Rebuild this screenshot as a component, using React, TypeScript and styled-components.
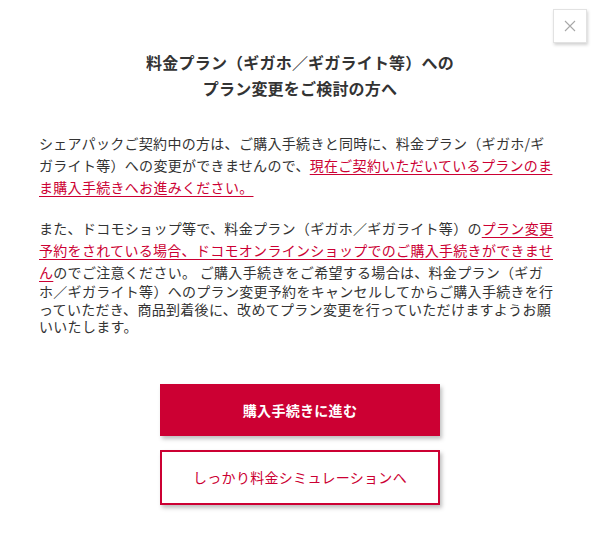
import React from "react";
import styled, { createGlobalStyle } from "styled-components";

const GlobalStyle = createGlobalStyle`
  html, body {
    margin: 0;
    padding: 0;
    background: #ffffff;
  }
  body {
    font-family: "Noto Sans CJK JP", "Noto Sans", sans-serif;
    color: #333333;
  }
`;

const Modal = styled.div`
  position: relative;
  width: 600px;
  height: 556px;
  box-sizing: border-box;
  padding-top: 49px;
  background: #ffffff;
`;

const CloseBtn = styled.button`
  position: absolute;
  top: 9px;
  right: 13px;
  width: 34px;
  height: 34px;
  padding: 0;
  border: 1px solid #e2e2e2;
  background: #ffffff;
  box-shadow: 1px 2px 3px rgba(0, 0, 0, 0.18);
  display: flex;
  align-items: center;
  justify-content: center;
  cursor: pointer;
`;

const Title = styled.h2`
  margin: 0;
  text-align: center;
  font-size: 16px;
  line-height: 26px;
  font-weight: 700;
  letter-spacing: 0.2px;
  color: #333333;
`;

const Body = styled.div`
  width: 518px;
  margin: 31px 0 0 39px;
  font-size: 14px;
  letter-spacing: 0.3px;
  color: #333333;
  line-break: loose;
`;

const Para = styled.p<{ $tight?: boolean }>`
  margin: 0 0 19px;
  line-height: ${(p) => (p.$tight ? "17.5px" : "22px")};
  &:last-child {
    margin-bottom: 0;
  }
`;

const Notice = styled.span`
  line-height: 22px;
`;

const Link = styled.a`
  color: #cc0033;
  text-decoration: underline;
  text-decoration-color: #cc0033;
  text-underline-offset: 3px;
`;

const Actions = styled.div`
  display: flex;
  flex-direction: column;
  align-items: center;
  gap: 14px;
  margin-top: 48px;
`;

const ActionBtn = styled.button<{ $primary?: boolean }>`
  width: 280px;
  height: ${(p) => (p.$primary ? "52px" : "55px")};
  box-sizing: border-box;
  border: 2px solid #cc0033;
  background: ${(p) => (p.$primary ? "#cc0033" : "#ffffff")};
  color: ${(p) => (p.$primary ? "#ffffff" : "#cc0033")};
  font-family: "Noto Sans CJK JP", "Noto Sans", sans-serif;
  font-size: 14px;
  letter-spacing: 0.3px;
  font-weight: ${(p) => (p.$primary ? 700 : 400)};
  box-shadow: 2px 3px 4px rgba(0, 0, 0, 0.25);
  cursor: pointer;
`;

export default function App() {
  return (
    <>
      <GlobalStyle />
      <Modal>
        <CloseBtn aria-label="閉じる">
          <svg width="12" height="12" viewBox="0 0 12 12">
            <path d="M1 1L11 11M11 1L1 11" stroke="#a8a8a8" strokeWidth="1.1" fill="none" />
          </svg>
        </CloseBtn>
        <Title>
          料金プラン（ギガホ／ギガライト等）への
          <br />
          プラン変更をご検討の方へ
        </Title>
        <Body>
          <Para>
            シェアパックご契約中の方は、ご購入手続きと同時に、料金プラン（ギガホ/ギガライト等）への変更ができませんので、
            <Link href="#">現在ご契約いただいているプランのまま購入手続きへお進みください。 </Link>
          </Para>
          <Para $tight>
            <Notice>
              また、ドコモショップ等で、料金プラン（ギガホ／ギガライト等）の
              <Link href="#">プラン変更予約をされている場合、ドコモオンラインショップでのご購入手続きができません</Link>
              のでご注意ください。
            </Notice>
            {" "}ご購入手続きをご希望する場合は、料金プラン（ギガホ／ギガライト等）へのプラン変更予約をキャンセルしてからご購入手続きを行っていただき、商品到着後に、改めてプラン変更を行っていただけますようお願いいたします。
          </Para>
        </Body>
        <Actions>
          <ActionBtn $primary>購入手続きに進む</ActionBtn>
          <ActionBtn>しっかり料金シミュレーションへ</ActionBtn>
        </Actions>
      </Modal>
    </>
  );
}
